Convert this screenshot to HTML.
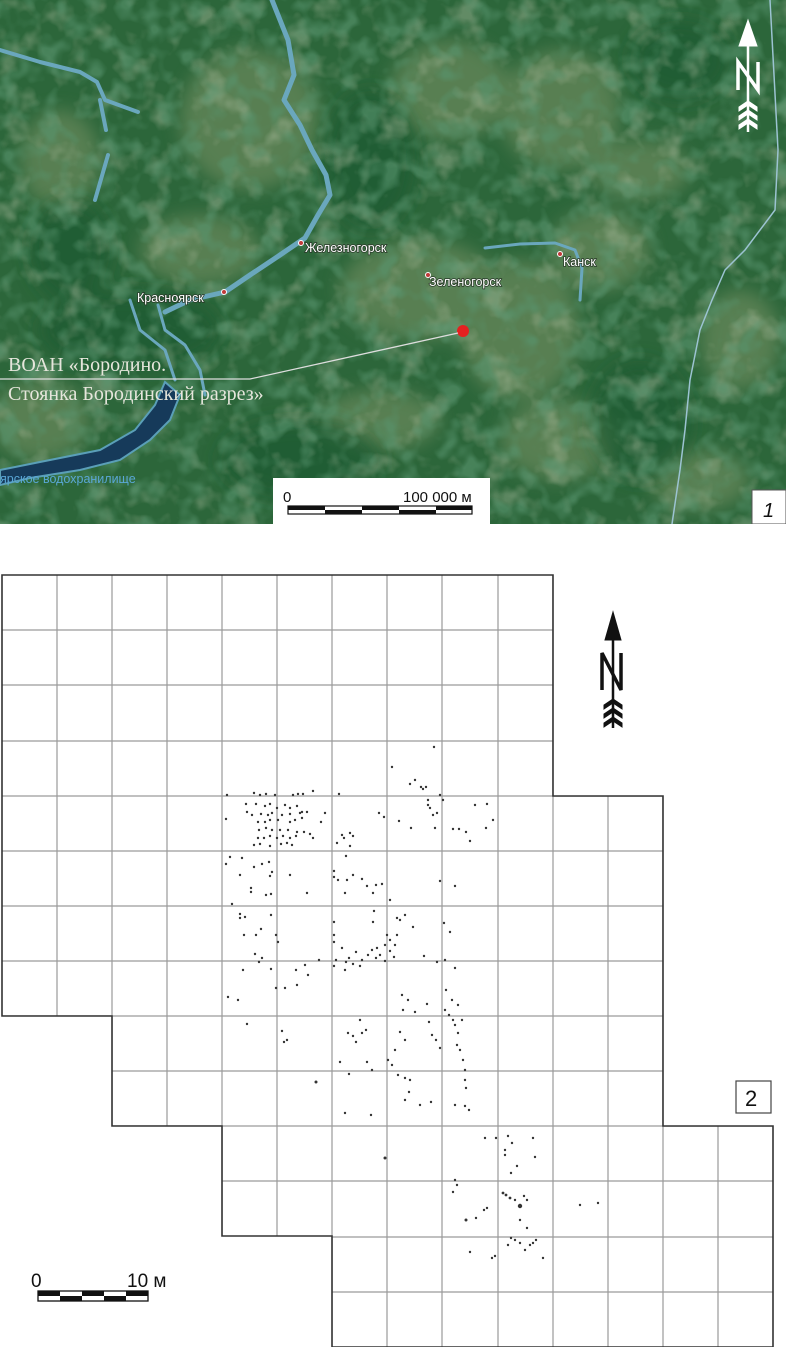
<!DOCTYPE html>
<html><head><meta charset="utf-8"><style>
html,body{margin:0;padding:0;background:#fff;width:786px;height:1347px;overflow:hidden}
svg{display:block}
</style></head><body>
<svg width="786" height="1347" viewBox="0 0 786 1347" xmlns="http://www.w3.org/2000/svg">
<defs>
<filter id="bl" x="-50%" y="-50%" width="200%" height="200%"><feGaussianBlur stdDeviation="9"/></filter>
<filter id="tx" x="0" y="0" width="100%" height="100%"><feTurbulence type="fractalNoise" baseFrequency="0.035" numOctaves="3" seed="7"/><feColorMatrix type="matrix" values="0 0 0 0 0.45  0 0 0 0 0.54  0 0 0 0 0.38  3.5 0 0 0 -1.8"/></filter>
<filter id="tx2" x="0" y="0" width="100%" height="100%"><feTurbulence type="fractalNoise" baseFrequency="0.05" numOctaves="2" seed="21"/><feColorMatrix type="matrix" values="0 0 0 0 0.10  0 0 0 0 0.30  0 0 0 0 0.16  3.5 0 0 0 -1.6"/></filter>
<clipPath id="mc"><rect x="0" y="0" width="786" height="524"/></clipPath>
<clipPath id="gc"><path d="M2,575H553V796H663V1126H773V1347H332V1236H222V1126H112V1016H2Z"/></clipPath>
</defs>
<!-- MAP -->
<g clip-path="url(#mc)">
<rect x="0" y="0" width="786" height="524" fill="#2c663a"/>
<g filter="url(#bl)" fill="#7b9466" opacity="0.55">
<ellipse cx="250" cy="120" rx="70" ry="70"/>
<ellipse cx="450" cy="90" rx="60" ry="50"/>
<ellipse cx="560" cy="110" rx="60" ry="60"/>
<ellipse cx="200" cy="250" rx="60" ry="35"/>
<ellipse cx="420" cy="290" rx="80" ry="50"/>
<ellipse cx="520" cy="330" rx="60" ry="70"/>
<ellipse cx="600" cy="250" rx="50" ry="40"/>
<ellipse cx="640" cy="170" rx="50" ry="30"/>
<ellipse cx="40" cy="420" rx="50" ry="40"/>
<ellipse cx="380" cy="420" rx="60" ry="30"/>
<ellipse cx="560" cy="440" rx="60" ry="40"/>
<ellipse cx="60" cy="160" rx="40" ry="50"/>
<ellipse cx="700" cy="480" rx="50" ry="30"/>
<ellipse cx="740" cy="340" rx="40" ry="50"/>
</g>
<g filter="url(#bl)" fill="#1f5a30" opacity="0.7">
<ellipse cx="370" cy="160" rx="45" ry="70"/>
<ellipse cx="130" cy="330" rx="90" ry="40"/>
<ellipse cx="300" cy="460" rx="80" ry="40"/>
<ellipse cx="640" cy="420" rx="50" ry="60"/>
<ellipse cx="70" cy="250" rx="40" ry="50"/>
<ellipse cx="680" cy="60" rx="50" ry="40"/>
</g>
<rect x="0" y="0" width="786" height="524" filter="url(#tx)" opacity="0.4"/>
<rect x="0" y="0" width="786" height="524" filter="url(#tx2)" opacity="0.6"/>
<g fill="none" stroke="#6aa7bd" stroke-linecap="round" stroke-linejoin="round">
<path d="M272,0 L288,40 L294,75 L284,100 L300,125 L312,150 L326,175 L330,195 L318,215 L305,238 L280,255 L250,275 L225,292 L190,300 L165,312" stroke-width="5"/>
<path d="M0,50 L40,62 L80,72 L97,82 L105,100 L138,112" stroke-width="4"/>
<path d="M100,100 L106,130 M108,155 L95,200" stroke-width="4"/>
<path d="M130,300 L140,330 L165,350 L175,380 M158,305 L165,330 L185,345 L200,370 L205,395" stroke-width="3"/>
<path d="M485,248 L520,244 L555,243 L575,250 L582,268 L580,300" stroke-width="3"/>
<path d="M770,0 L778,150 L775,210 L745,250 L725,270 L712,300 L700,330 L690,380 L685,430 L680,470 L672,524" stroke-width="1.5" stroke="#9cc3d2"/>
</g>
<path d="M165,382 L180,395 L170,420 L150,440 L120,460 L80,470 L30,478 L0,485 L0,470 L40,462 L100,450 L135,430 L155,405 Z" fill="#163a5a" stroke="#5a9fb8" stroke-width="2"/>
<g font-family="Liberation Sans, sans-serif" font-size="12.5" fill="#fff" style="paint-order:stroke" stroke="#2a3a2a" stroke-width="1.5">
<text x="305" y="252">Железногорск</text>
<text x="137" y="302">Красноярск</text>
<text x="429" y="286">Зеленогорск</text>
<text x="563" y="266">Канск</text>
</g>
<text x="0" y="483" font-family="Liberation Sans, sans-serif" font-size="12.5" fill="#5aa7d6">ярское водохранилище</text>
<g fill="#c03a3a" stroke="#fff" stroke-width="1"><circle cx="301" cy="243" r="2.5"/><circle cx="224" cy="292" r="2.5"/><circle cx="428" cy="275" r="2.5"/><circle cx="560" cy="254" r="2.5"/></g>
<circle cx="463" cy="331" r="6" fill="#e52020"/>
<path d="M0,379 L250,379 L458,333" fill="none" stroke="#ddd" stroke-width="1.3"/>
<g font-family="Liberation Serif, serif" font-size="20" fill="#e6e6dc">
<text x="8" y="371">ВОАН «Бородино.</text>
<text x="8" y="400">Стоянка Бородинский разрез»</text>
</g>
<g fill="#fff" stroke="#fff">
<path d="M748,20 L739,46 L757,46 Z"/>
<line x1="748" y1="45" x2="748" y2="132" stroke-width="2.5"/>
<path d="M738,90 V62 L758,90 V62" fill="none" stroke-width="3.5"/>
<path d="M739,107 L748,101 L757,107 L757,111 L748,105 L739,111 Z M739,116 L748,110 L757,116 L757,120 L748,114 L739,120 Z M739,125 L748,119 L757,125 L757,129 L748,123 L739,129 Z" stroke-width="1"/>
</g>
<rect x="273" y="478" width="217" height="46" fill="#fff"/>
<g font-family="Liberation Sans, sans-serif" font-size="15" fill="#111">
<text x="283" y="502">0</text><text x="403" y="502">100 000 м</text>
</g>
<rect x="288" y="506" width="184" height="8" fill="#fff" stroke="#111" stroke-width="1.2"/>
<g fill="#111"><rect x="288" y="506" width="37" height="4"/><rect x="325" y="510" width="37" height="4"/><rect x="362" y="506" width="37" height="4"/><rect x="399" y="510" width="37" height="4"/><rect x="436" y="506" width="36" height="4"/></g>
<rect x="752" y="490" width="34" height="34" fill="#fff" stroke="#555"/>
<text x="763" y="517" font-family="Liberation Sans, sans-serif" font-style="italic" font-size="20" fill="#111">1</text>
</g>
<!-- GRID -->
<g clip-path="url(#gc)" stroke="#9a9a9a" stroke-width="1.2">
<path d="M57,560V1347M112,560V1347M167,560V1347M222,560V1347M277,560V1347M332,560V1347M387,560V1347M442,560V1347M498,560V1347M553,560V1347M608,560V1347M663,560V1347M718,560V1347"/>
<path d="M0,630H786M0,685H786M0,741H786M0,796H786M0,851H786M0,906H786M0,961H786M0,1016H786M0,1071H786M0,1126H786M0,1181H786M0,1237H786M0,1292H786"/>
</g>
<path d="M2,575H553V796H663V1126H773V1347H332V1236H222V1126H112V1016H2Z" fill="none" stroke="#333" stroke-width="1.6"/>
<g fill="#333">
<circle cx="227" cy="795" r="1.2"/><circle cx="254" cy="793" r="1.2"/><circle cx="260" cy="795" r="1.2"/><circle cx="266" cy="794" r="1.2"/><circle cx="275" cy="795" r="1.2"/><circle cx="293" cy="795" r="1.2"/><circle cx="298" cy="794" r="1.2"/><circle cx="303" cy="794" r="1.2"/><circle cx="313" cy="791" r="1.2"/>
<circle cx="246" cy="804" r="1.2"/><circle cx="256" cy="804" r="1.2"/><circle cx="265" cy="806" r="1.2"/><circle cx="270" cy="804" r="1.2"/><circle cx="277" cy="808" r="1.2"/><circle cx="285" cy="805" r="1.2"/><circle cx="290" cy="808" r="1.2"/><circle cx="297" cy="806" r="1.2"/><circle cx="302" cy="812" r="1.2"/><circle cx="307" cy="812" r="1.2"/><circle cx="252" cy="815" r="1.2"/><circle cx="261" cy="814" r="1.2"/><circle cx="268" cy="815" r="1.2"/><circle cx="272" cy="813" r="1.2"/><circle cx="282" cy="815" r="1.2"/><circle cx="290" cy="814" r="1.2"/><circle cx="300" cy="813" r="1.2"/><circle cx="247" cy="812" r="1.2"/><circle cx="258" cy="822" r="1.2"/><circle cx="265" cy="822" r="1.2"/><circle cx="270" cy="820" r="1.2"/><circle cx="278" cy="820" r="1.2"/><circle cx="290" cy="822" r="1.2"/><circle cx="295" cy="820" r="1.2"/><circle cx="302" cy="818" r="1.2"/><circle cx="325" cy="813" r="1.2"/><circle cx="321" cy="822" r="1.2"/><circle cx="259" cy="830" r="1.2"/><circle cx="266" cy="828" r="1.2"/><circle cx="272" cy="830" r="1.2"/><circle cx="280" cy="830" r="1.2"/><circle cx="288" cy="830" r="1.2"/><circle cx="297" cy="832" r="1.2"/><circle cx="304" cy="832" r="1.2"/><circle cx="310" cy="834" r="1.2"/><circle cx="313" cy="838" r="1.2"/><circle cx="258" cy="838" r="1.2"/><circle cx="264" cy="838" r="1.2"/><circle cx="270" cy="836" r="1.2"/><circle cx="277" cy="838" r="1.2"/><circle cx="283" cy="836" r="1.2"/><circle cx="290" cy="838" r="1.2"/><circle cx="296" cy="836" r="1.2"/><circle cx="254" cy="845" r="1.2"/><circle cx="260" cy="844" r="1.2"/><circle cx="270" cy="846" r="1.2"/><circle cx="281" cy="844" r="1.2"/><circle cx="287" cy="843" r="1.2"/><circle cx="292" cy="845" r="1.2"/><circle cx="226" cy="819" r="1.2"/>
<circle cx="339" cy="794" r="1.2"/><circle cx="337" cy="843" r="1.2"/><circle cx="342" cy="835" r="1.2"/><circle cx="350" cy="833" r="1.2"/><circle cx="344" cy="838" r="1.2"/><circle cx="353" cy="836" r="1.2"/><circle cx="350" cy="846" r="1.2"/>
<circle cx="379" cy="813" r="1.2"/><circle cx="384" cy="817" r="1.2"/><circle cx="399" cy="821" r="1.2"/><circle cx="411" cy="828" r="1.2"/><circle cx="443" cy="800" r="1.2"/><circle cx="453" cy="829" r="1.2"/><circle cx="459" cy="829" r="1.2"/><circle cx="466" cy="832" r="1.2"/><circle cx="470" cy="841" r="1.2"/><circle cx="475" cy="805" r="1.2"/><circle cx="487" cy="804" r="1.2"/><circle cx="486" cy="828" r="1.2"/><circle cx="493" cy="820" r="1.2"/>
<circle cx="410" cy="784" r="1.2"/><circle cx="415" cy="780" r="1.2"/><circle cx="421" cy="787" r="1.2"/><circle cx="423" cy="789" r="1.2"/><circle cx="426" cy="787" r="1.2"/><circle cx="428" cy="800" r="1.2"/><circle cx="428" cy="805" r="1.2"/><circle cx="430" cy="808" r="1.2"/><circle cx="433" cy="815" r="1.2"/><circle cx="435" cy="828" r="1.2"/><circle cx="437" cy="813" r="1.2"/><circle cx="434" cy="747" r="1.2"/><circle cx="392" cy="767" r="1.2"/><circle cx="440" cy="795" r="1.2"/>
<circle cx="226" cy="864" r="1.2"/><circle cx="242" cy="858" r="1.2"/><circle cx="230" cy="857" r="1.2"/><circle cx="254" cy="867" r="1.2"/><circle cx="262" cy="864" r="1.2"/><circle cx="269" cy="862" r="1.2"/><circle cx="272" cy="872" r="1.2"/><circle cx="240" cy="875" r="1.2"/><circle cx="270" cy="876" r="1.2"/><circle cx="251" cy="888" r="1.2"/><circle cx="251" cy="892" r="1.2"/><circle cx="266" cy="895" r="1.2"/><circle cx="271" cy="894" r="1.2"/><circle cx="290" cy="875" r="1.2"/><circle cx="232" cy="904" r="1.2"/><circle cx="240" cy="914" r="1.2"/><circle cx="240" cy="918" r="1.2"/><circle cx="271" cy="915" r="1.2"/><circle cx="307" cy="893" r="1.2"/><circle cx="244" cy="935" r="1.2"/><circle cx="245" cy="917" r="1.2"/><circle cx="261" cy="929" r="1.2"/><circle cx="256" cy="935" r="1.2"/><circle cx="276" cy="935" r="1.2"/><circle cx="278" cy="942" r="1.2"/><circle cx="262" cy="958" r="1.2"/><circle cx="271" cy="969" r="1.2"/><circle cx="259" cy="962" r="1.2"/><circle cx="255" cy="954" r="1.2"/><circle cx="243" cy="970" r="1.2"/><circle cx="276" cy="988" r="1.2"/><circle cx="285" cy="988" r="1.2"/><circle cx="297" cy="985" r="1.2"/><circle cx="296" cy="970" r="1.2"/><circle cx="308" cy="975" r="1.2"/><circle cx="305" cy="965" r="1.2"/><circle cx="319" cy="960" r="1.2"/><circle cx="238" cy="1000" r="1.2"/><circle cx="228" cy="997" r="1.2"/>
<circle cx="334" cy="871" r="1.2"/><circle cx="334" cy="877" r="1.2"/><circle cx="345" cy="893" r="1.2"/><circle cx="338" cy="880" r="1.2"/><circle cx="353" cy="875" r="1.2"/><circle cx="347" cy="880" r="1.2"/><circle cx="346" cy="856" r="1.2"/><circle cx="362" cy="879" r="1.2"/><circle cx="367" cy="886" r="1.2"/><circle cx="376" cy="885" r="1.2"/><circle cx="382" cy="884" r="1.2"/><circle cx="373" cy="893" r="1.2"/><circle cx="390" cy="900" r="1.2"/><circle cx="373" cy="922" r="1.2"/><circle cx="374" cy="911" r="1.2"/><circle cx="397" cy="918" r="1.2"/><circle cx="413" cy="927" r="1.2"/><circle cx="390" cy="951" r="1.2"/><circle cx="334" cy="922" r="1.2"/><circle cx="334" cy="935" r="1.2"/><circle cx="334" cy="942" r="1.2"/><circle cx="336" cy="960" r="1.2"/><circle cx="334" cy="966" r="1.2"/><circle cx="345" cy="970" r="1.2"/><circle cx="349" cy="958" r="1.2"/><circle cx="353" cy="964" r="1.2"/><circle cx="356" cy="952" r="1.2"/><circle cx="362" cy="960" r="1.2"/><circle cx="368" cy="955" r="1.2"/><circle cx="372" cy="950" r="1.2"/><circle cx="376" cy="958" r="1.2"/><circle cx="380" cy="955" r="1.2"/><circle cx="385" cy="945" r="1.2"/><circle cx="390" cy="940" r="1.2"/><circle cx="395" cy="945" r="1.2"/><circle cx="397" cy="935" r="1.2"/><circle cx="400" cy="920" r="1.2"/><circle cx="405" cy="915" r="1.2"/><circle cx="377" cy="948" r="1.2"/><circle cx="385" cy="961" r="1.2"/><circle cx="394" cy="957" r="1.2"/><circle cx="387" cy="935" r="1.2"/><circle cx="360" cy="966" r="1.2"/><circle cx="342" cy="948" r="1.2"/><circle cx="346" cy="962" r="1.2"/><circle cx="440" cy="881" r="1.2"/><circle cx="450" cy="932" r="1.2"/><circle cx="455" cy="886" r="1.2"/><circle cx="444" cy="923" r="1.2"/><circle cx="424" cy="956" r="1.2"/><circle cx="437" cy="962" r="1.2"/><circle cx="445" cy="960" r="1.2"/><circle cx="455" cy="968" r="1.2"/>
<circle cx="402" cy="995" r="1.2"/><circle cx="408" cy="1000" r="1.2"/><circle cx="403" cy="1010" r="1.2"/><circle cx="415" cy="1012" r="1.2"/><circle cx="427" cy="1004" r="1.2"/><circle cx="429" cy="1022" r="1.2"/><circle cx="432" cy="1035" r="1.2"/><circle cx="436" cy="1040" r="1.2"/><circle cx="440" cy="1048" r="1.2"/><circle cx="445" cy="1010" r="1.2"/><circle cx="449" cy="1015" r="1.2"/><circle cx="453" cy="1020" r="1.2"/><circle cx="455" cy="1025" r="1.2"/><circle cx="458" cy="1033" r="1.2"/><circle cx="457" cy="1045" r="1.2"/><circle cx="460" cy="1050" r="1.2"/><circle cx="463" cy="1060" r="1.2"/><circle cx="465" cy="1070" r="1.2"/><circle cx="465" cy="1080" r="1.2"/><circle cx="466" cy="1088" r="1.2"/><circle cx="452" cy="1000" r="1.2"/><circle cx="446" cy="990" r="1.2"/><circle cx="458" cy="1005" r="1.2"/><circle cx="462" cy="1020" r="1.2"/><circle cx="400" cy="1032" r="1.2"/><circle cx="405" cy="1040" r="1.2"/><circle cx="395" cy="1050" r="1.2"/><circle cx="388" cy="1060" r="1.2"/><circle cx="392" cy="1065" r="1.2"/><circle cx="398" cy="1075" r="1.2"/><circle cx="405" cy="1078" r="1.2"/><circle cx="410" cy="1080" r="1.2"/><circle cx="409" cy="1092" r="1.2"/><circle cx="405" cy="1100" r="1.2"/><circle cx="420" cy="1105" r="1.2"/><circle cx="431" cy="1102" r="1.2"/><circle cx="455" cy="1105" r="1.2"/><circle cx="465" cy="1106" r="1.2"/><circle cx="469" cy="1110" r="1.2"/><circle cx="348" cy="1033" r="1.2"/><circle cx="353" cy="1036" r="1.2"/><circle cx="356" cy="1042" r="1.2"/><circle cx="362" cy="1033" r="1.2"/><circle cx="366" cy="1030" r="1.2"/><circle cx="360" cy="1020" r="1.2"/><circle cx="340" cy="1062" r="1.2"/><circle cx="349" cy="1074" r="1.2"/><circle cx="367" cy="1062" r="1.2"/><circle cx="372" cy="1070" r="1.2"/><circle cx="345" cy="1113" r="1.2"/><circle cx="371" cy="1115" r="1.2"/><circle cx="316" cy="1082" r="1.5"/><circle cx="282" cy="1031" r="1.2"/><circle cx="287" cy="1040" r="1.2"/><circle cx="284" cy="1042" r="1.2"/><circle cx="247" cy="1024" r="1.2"/><circle cx="385" cy="1158" r="1.5"/>
<circle cx="485" cy="1138" r="1.2"/><circle cx="496" cy="1138" r="1.2"/><circle cx="508" cy="1136" r="1.2"/><circle cx="512" cy="1143" r="1.2"/><circle cx="505" cy="1150" r="1.2"/><circle cx="505" cy="1155" r="1.2"/><circle cx="533" cy="1138" r="1.2"/><circle cx="535" cy="1157" r="1.2"/><circle cx="517" cy="1166" r="1.2"/><circle cx="511" cy="1173" r="1.2"/><circle cx="455" cy="1180" r="1.2"/><circle cx="457" cy="1185" r="1.2"/><circle cx="453" cy="1192" r="1.2"/><circle cx="503" cy="1193" r="1.4"/><circle cx="506" cy="1195" r="1.4"/><circle cx="510" cy="1198" r="1.4"/><circle cx="515" cy="1200" r="1.2"/><circle cx="520" cy="1206" r="2.2"/><circle cx="524" cy="1196" r="1.2"/><circle cx="527" cy="1200" r="1.2"/><circle cx="487" cy="1208" r="1.2"/><circle cx="484" cy="1210" r="1.2"/><circle cx="476" cy="1218" r="1.2"/><circle cx="466" cy="1220" r="1.5"/><circle cx="520" cy="1220" r="1.2"/><circle cx="527" cy="1228" r="1.2"/><circle cx="511" cy="1238" r="1.2"/><circle cx="515" cy="1240" r="1.2"/><circle cx="520" cy="1243" r="1.2"/><circle cx="525" cy="1250" r="1.2"/><circle cx="530" cy="1245" r="1.2"/><circle cx="533" cy="1243" r="1.2"/><circle cx="536" cy="1240" r="1.2"/><circle cx="543" cy="1258" r="1.2"/><circle cx="470" cy="1252" r="1.2"/><circle cx="492" cy="1258" r="1.2"/><circle cx="495" cy="1256" r="1.2"/><circle cx="580" cy="1205" r="1.2"/><circle cx="598" cy="1203" r="1.2"/><circle cx="508" cy="1245" r="1.2"/>
</g>
<g fill="#111" stroke="#111">
<path d="M613,612 L605,640 L621,640 Z"/>
<line x1="613" y1="638" x2="613" y2="728" stroke-width="2.5"/>
<path d="M602,690 V653 L621,690 V653" fill="none" stroke-width="3.5"/>
<path d="M604,705 L613,699 L622,705 L622,709 L613,703 L604,709 Z M604,714 L613,708 L622,714 L622,718 L613,712 L604,718 Z M604,723 L613,717 L622,723 L622,727 L613,721 L604,727 Z" stroke-width="1"/>
</g>
<rect x="736" y="1081" width="35" height="32" fill="#fff" stroke="#444" stroke-width="1.2"/>
<text x="745" y="1106" font-family="Liberation Sans, sans-serif" font-size="22" fill="#111">2</text>
<g font-family="Liberation Sans, sans-serif" font-size="19" fill="#111">
<text x="31" y="1287">0</text><text x="127" y="1287">10 м</text>
</g>
<rect x="38" y="1291" width="110" height="10" fill="#fff" stroke="#111" stroke-width="1.3"/>
<g fill="#111"><rect x="38" y="1291" width="22" height="5"/><rect x="60" y="1296" width="22" height="5"/><rect x="82" y="1291" width="22" height="5"/><rect x="104" y="1296" width="22" height="5"/><rect x="126" y="1291" width="22" height="5"/></g>
</svg>
</body></html>
